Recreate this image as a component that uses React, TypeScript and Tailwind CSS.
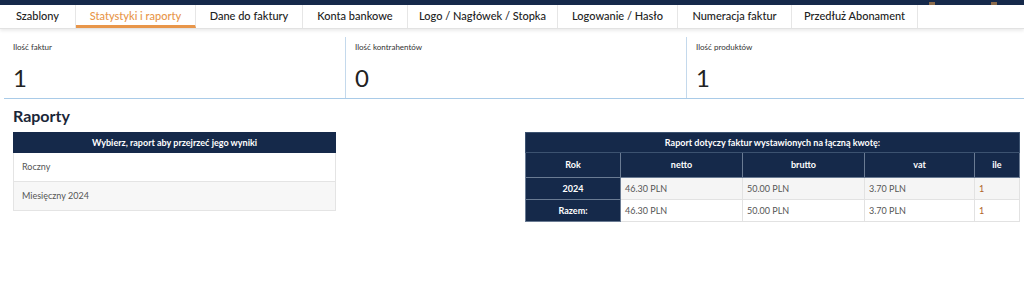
import React from "react";

const tabs = [
  { label: "Szablony", w: "w-[76px]" },
  { label: "Statystyki i raporty", w: "w-[120px]", active: true },
  { label: "Dane do faktury", w: "w-[107px]" },
  { label: "Konta bankowe", w: "w-[105px]" },
  { label: "Logo / Nagłówek / Stopka", w: "w-[150px]" },
  { label: "Logowanie / Hasło", w: "w-[120px]" },
  { label: "Numeracja faktur", w: "w-[114px]" },
  { label: "Przedłuż Abonament", w: "w-[126px]" },
];

const stats = [
  { label: "Ilość faktur", value: "1", w: "w-[341px]" },
  { label: "Ilość kontrahentów", value: "0", w: "w-[341px]" },
  { label: "Ilość produktów", value: "1", w: "flex-1" },
];

export default function App() {
  return (
    <div className="w-[1024px] h-[281px] bg-white overflow-hidden text-[#333]" style={{ fontFamily: "Lato, 'Noto Sans', sans-serif" }}>
      <div className="h-[5px] bg-[#15294a] relative">
        <div className="absolute left-[929px] top-[2px] w-[6px] h-[3px] bg-[#8a6a4a]" />
        <div className="absolute left-[991px] top-[2px] w-[6px] h-[3px] bg-[#8a6a4a]" />
      </div>
      <div className="flex h-[24px] border-b border-[#e2e2e2] shadow-[0_2px_3px_rgba(0,0,0,0.08)]">
        {tabs.map((t) => (
          <div
            key={t.label}
            className={`${t.w} flex items-center justify-center border-r border-[#e6e6e6] text-[11px] font-medium ${
              t.active ? "text-[#e8964a] border-b-[3px] border-b-[#e8964a] pt-[2px]" : "text-[#222]"
            }`}
          >
            {t.label}
          </div>
        ))}
      </div>
      <div className="flex mt-[8px] ml-[4px] border-b border-[#a9cbe8] h-[62px]">
        {stats.map((s, i) => (
          <div
            key={s.label}
            className={`${s.w} ${i > 0 ? "border-l border-[#c4d9ec]" : ""} pl-[9px] pt-[4px]`}
          >
            <div className="text-[8px] text-[#333]">{s.label}</div>
            <div className="text-[24px] font-normal leading-none mt-[13px] text-[#222]">{s.value}</div>
          </div>
        ))}
      </div>
      <div className="pl-[13px] pt-[9px] text-[16px] font-bold text-[#1a2638] leading-none">Raporty</div>
      <div className="flex mt-[7px]">
        <div className="ml-[13px] w-[323px] mt-[1px]">
          <div className="h-[21px] bg-[#15294a] text-white text-[9px] font-bold flex items-center justify-center">
            Wybierz, raport aby przejrzeć jego wyniki
          </div>
          <div className="h-[29px] border border-t-0 border-[#e4e4e4] flex items-center pl-[8px] text-[9px] text-[#555]">Roczny</div>
          <div className="h-[29px] border border-t-0 border-[#e4e4e4] bg-[#f7f7f7] flex items-center pl-[8px] text-[9px] text-[#555]">Miesięczny 2024</div>
        </div>
        <div className="ml-[189px] w-[495px] mt-[1px]">
          <table className="w-full border-collapse text-[9px]">
            <thead>
              <tr className="h-[20px] bg-[#15294a] text-white">
                <th colSpan={5} className="font-bold border border-[#3c5270]">Raport dotyczy faktur wystawionych na łączną kwotę:</th>
              </tr>
              <tr className="h-[25px] bg-[#15294a] text-white">
                <th className="w-[95px] font-bold border border-[#6a7b93]">Rok</th>
                <th className="w-[122px] font-bold border border-[#6a7b93]">netto</th>
                <th className="w-[122px] font-bold border border-[#6a7b93]">brutto</th>
                <th className="w-[110px] font-bold border border-[#6a7b93]">vat</th>
                <th className="font-bold border border-[#6a7b93]">ile</th>
              </tr>
            </thead>
            <tbody>
              {[
                { rok: "2024", bg: "bg-[#f5f5f5]" },
                { rok: "Razem:", bg: "bg-white" },
              ].map((r) => (
                <tr key={r.rok} className={`h-[22px] ${r.bg} text-[#555]`}>
                  <td className="bg-[#15294a] text-white font-bold text-center border border-[#6a7b93]">{r.rok}</td>
                  <td className="pl-[4px] border border-[#e2e2e2]">46.30 PLN</td>
                  <td className="pl-[4px] border border-[#e2e2e2]">50.00 PLN</td>
                  <td className="pl-[4px] border border-[#e2e2e2]">3.70 PLN</td>
                  <td className="pl-[4px] border border-[#e2e2e2] text-[#b0652a]">1</td>
                </tr>
              ))}
            </tbody>
          </table>
        </div>
      </div>
    </div>
  );
}
